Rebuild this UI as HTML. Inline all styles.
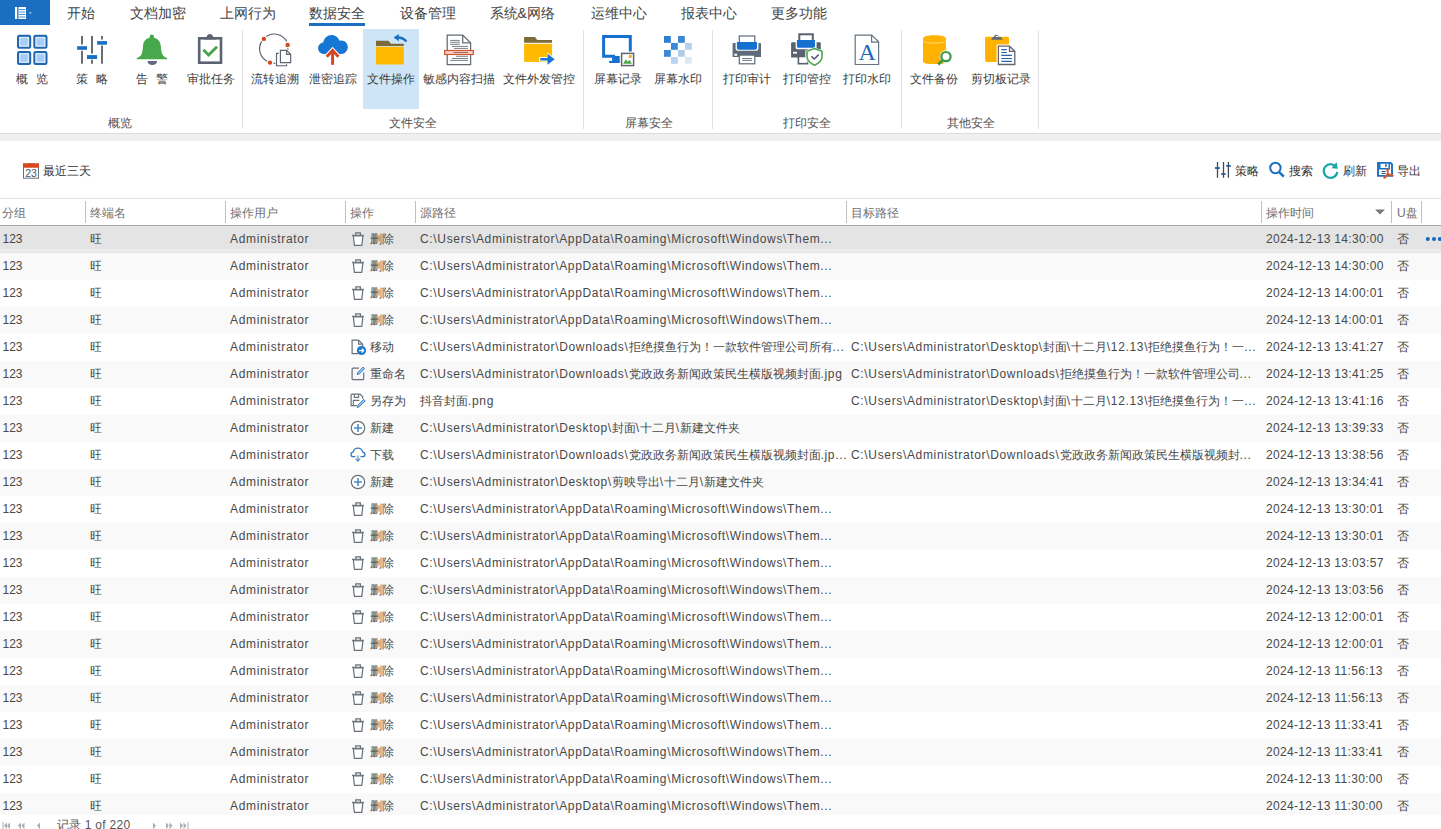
<!DOCTYPE html><html><head><meta charset="utf-8"><title>数据安全</title><style>
*{box-sizing:border-box}
html,body{margin:0;padding:0}
body{width:1441px;height:829px;overflow:hidden;position:relative;background:#fff;font-family:"Liberation Sans", sans-serif;color:#333}
.a{position:absolute;white-space:pre}
.t14{font-size:14px;line-height:20px;color:#444}
.t12{font-size:12px;line-height:20px;color:#3c3c3c}
.ic{position:absolute;width:40px;height:40px;overflow:visible}
.row{position:absolute;left:0;width:1441px;height:27px;font-size:12px;line-height:27px;color:#484848}
.row span{position:absolute;top:0;white-space:pre}
.L{letter-spacing:0.66px}
.c{letter-spacing:0}
i{font-style:normal;display:inline-block;width:1em;text-align:center;letter-spacing:0}
.hd{position:absolute;top:203px;font-size:12px;line-height:20px;color:#707070;white-space:pre}
.sep{position:absolute;top:201px;width:1px;height:22px;background:#c0c0c0}
.rsep{position:absolute;top:30px;width:1px;height:99px;background:#e2e2e2}
</style></head><body><div class="a" style="left:0;top:0;width:50px;height:25px;background:#1b6ec2"></div>
<svg class="a" style="left:0;top:0" width="50" height="25" viewBox="0 0 50 25"><rect x="15" y="7" width="2.2" height="12" fill="#fff"/><rect x="18.5" y="7" width="7.5" height="12" fill="#fff"/><path d="M19.2 9.5h6M19.2 12h6M19.2 14.5h6M19.2 17h6" stroke="#1b6ec2" stroke-width="0.8"/><rect x="29.5" y="12.2" width="1.8" height="1.2" fill="#cfe0f4"/></svg>
<div class="a t14" style="left:67px;top:3px"><i>开</i><i>始</i></div>
<div class="a t14" style="left:129.5px;top:3px"><i>文</i><i>档</i><i>加</i><i>密</i></div>
<div class="a t14" style="left:219.5px;top:3px"><i>上</i><i>网</i><i>行</i><i>为</i></div>
<div class="a t14" style="left:309px;top:3px"><i>数</i><i>据</i><i>安</i><i>全</i></div>
<div class="a t14" style="left:400px;top:3px"><i>设</i><i>备</i><i>管</i><i>理</i></div>
<div class="a t14" style="left:489.5px;top:3px"><i>系</i><i>统</i>&<i>网</i><i>络</i></div>
<div class="a t14" style="left:591px;top:3px"><i>运</i><i>维</i><i>中</i><i>心</i></div>
<div class="a t14" style="left:681px;top:3px"><i>报</i><i>表</i><i>中</i><i>心</i></div>
<div class="a t14" style="left:771px;top:3px"><i>更</i><i>多</i><i>功</i><i>能</i></div>
<div class="a" style="left:309px;top:23px;width:56px;height:3px;background:#1b6ec2"></div>
<div class="a" style="left:363px;top:29px;width:56px;height:80px;background:#cde5f7"></div>
<div class="rsep" style="left:242px"></div>
<div class="rsep" style="left:583px"></div>
<div class="rsep" style="left:712px"></div>
<div class="rsep" style="left:901px"></div>
<div class="rsep" style="left:1038px"></div>
<div class="a" style="left:0;top:133px;width:1441px;height:1px;background:#dcdcdc"></div>
<div class="a" style="left:0;top:134px;width:1441px;height:7px;background:#f0f0f0"></div>
<svg class="ic" style="left:12px;top:30px" viewBox="0 0 40 40"><g fill="#a9ccf6" stroke="#1f68b0" stroke-width="2">
<rect x="6" y="5.8" width="12.2" height="12" rx="1.3"/><rect x="22.3" y="5.8" width="12.2" height="12" rx="1.3"/>
<rect x="6" y="22" width="12.2" height="12" rx="1.3"/><rect x="22.3" y="22" width="12.2" height="12" rx="1.3"/></g>
<g fill="none" stroke="#dff0ff" stroke-width="1"><rect x="7.8" y="7.6" width="8.6" height="8.4"/><rect x="24.1" y="7.6" width="8.6" height="8.4"/><rect x="7.8" y="23.8" width="8.6" height="8.4"/><rect x="24.1" y="23.8" width="8.6" height="8.4"/></g></svg>
<svg class="ic" style="left:72px;top:30px" viewBox="0 0 40 40"><g stroke="#5a5f66" stroke-width="1.8"><path d="M10 6v8.6M10 20.8v13M20 6v17.4M20 29.8v4M30 6v3.5M30 15.5v18.3"/></g>
<g fill="#1a6fc4"><rect x="5.1" y="16.2" width="9.9" height="3.6"/><rect x="15" y="25.1" width="10.1" height="3.9"/><rect x="25.1" y="11.1" width="9.9" height="3.6"/></g></svg>
<svg class="ic" style="left:132px;top:30px" viewBox="0 0 40 40"><circle cx="19.8" cy="6.9" r="2.3" fill="#48a84c"/><path d="M19.8 7.6C25.6 7.6 28.4 11.2 28.8 16.2L29.4 21.5C29.9 25 31.6 26.8 34.9 28C35.4 28.3 35.2 29.3 34.6 29.3H5.2C4.6 29.3 4.4 28.3 4.9 28C8.2 26.8 9.9 25 10.4 21.5L11 16.2C11.4 11.2 14 7.6 19.8 7.6Z" fill="#48a84c"/>
<path d="M15.5 31h9.6c0 2.6-2.2 3.9-4.8 3.9s-4.8-1.3-4.8-3.9z" fill="#606b7b"/></svg>
<svg class="ic" style="left:190px;top:30px" viewBox="0 0 40 40"><rect x="9.2" y="8.3" width="21.8" height="24.4" fill="#fff" stroke="#5c6370" stroke-width="2.6"/>
<path d="M14 9.6h11.8v-1.6l-3-1.6c0-1.3-1.1-2.3-2.9-2.3s-2.9 1-2.9 2.3l-3 1.6z" fill="#5c6370"/>
<path d="M13.4 19.8l5.2 5.3l8.4-8.4" fill="none" stroke="#46a34a" stroke-width="2.8"/></svg>
<svg class="ic" style="left:255px;top:30px" viewBox="0 0 40 40"><g fill="none" stroke="#5b626c" stroke-width="1.15">
<path d="M11.4 6.4A14.3 14.3 0 0 1 31.8 11.6"/><path d="M6.6 11.4A14.3 14.3 0 0 0 12.2 31.3"/>
<path d="M32.9 18.2v1.6M18.6 33.3h1.6"/>
<path d="M23.7 23.4h-2.2v12.3h10.1v-1.4"/>
<path d="M25.4 20.3h6.2l4.1 4.1v8.2H25.4z"/><path d="M31.6 20.3v4.1h4.1"/></g>
<g fill="#d24a22"><circle cx="8.9" cy="8.9" r="2.2"/><circle cx="32.6" cy="15" r="2.2"/><circle cx="15" cy="32.6" r="2.2"/></g></svg>
<svg class="ic" style="left:313px;top:30px" viewBox="0 0 40 40"><path d="M11 24c-3.3 0-5.9-2.6-5.9-5.8c0-3 2.2-5.5 5.1-5.8c1.1-4.5 4.3-7.4 8.4-7.4c3.6 0 6.6 2.3 7.8 5.7c0.7-0.2 1.4-0.3 2.1-0.3c3.4 0 6.3 2.9 6.3 6.6s-2.9 7-6.5 7z" fill="#1676d4"/>
<g fill="none" stroke="#fff" stroke-width="5" stroke-linejoin="miter"><path d="M13.8 26.8L19.6 20.4L25.4 26.8"/><path d="M19.6 21v13.8"/></g>
<g fill="none" stroke="#d8431c" stroke-width="2.9" stroke-linejoin="miter"><path d="M13.8 26.8L19.6 20.4L25.4 26.8"/><path d="M19.6 21v13.8"/></g></svg>
<svg class="ic" style="left:370px;top:30px" viewBox="0 0 40 40"><path d="M6 10.8h12.4l2.8 3h12.6v2.2H6z" fill="#7c6b3a"/>
<rect x="6" y="16.8" width="27.8" height="17.7" fill="#ffb900"/>
<path d="M36.3 11.6c-2-3.4-5.3-4.3-10-4.1" fill="none" stroke="#1b6fc4" stroke-width="2.4"/>
<path d="M23.6 7.6l5.2-3.6v7.2z" fill="#1b6fc4"/></svg>
<svg class="ic" style="left:439px;top:30px" viewBox="0 0 40 40"><path d="M8.2 5.1h15.5l7.9 7.7v21.7H8.2z" fill="#fff" stroke="#646a72" stroke-width="1.25"/>
<path d="M23.7 5.1v7.7h7.9" fill="none" stroke="#646a72" stroke-width="1.25"/>
<g stroke="#7a8088" stroke-width="1"><path d="M11.1 10.4h9.7M11.1 12.3h9.7M11.1 14.3h9.7M13 16.4h16M15 18.4h14M17.1 26.3h11.9M13 28.5h16M11.1 30.4h17.9"/></g>
<rect x="5.6" y="20.5" width="28.7" height="4" fill="#fcd3c2" stroke="#cf5432" stroke-width="1.2"/>
<path d="M14.5 22.5h14.5" stroke="#8a5a50" stroke-width="0.9"/></svg>
<svg class="ic" style="left:519px;top:30px" viewBox="0 0 40 40"><path d="M5.1 7h10.8l2.3 2.9h14.9v2.9H5.1z" fill="#7c6b3a"/>
<rect x="5.1" y="13.8" width="28" height="18.1" fill="#ffb900"/>
<path d="M28 22.4l9.6 6.8l-9.6 6.8v-4.6h-7.8v-4.4h7.8z" fill="#fff"/>
<path d="M28.5 23.7l7.2 5.5l-7.2 5.6v-4.4h-7.2v-2.4h7.2z" fill="#1775d2"/></svg>
<svg class="ic" style="left:598px;top:30px" viewBox="0 0 40 40"><path d="M32.3 21.5V6.6H5.6v19.7h10v5.7" fill="none" stroke="#1670d0" stroke-width="3"/>
<rect x="11.1" y="30.9" width="10.6" height="2.1" fill="#1670d0"/><rect x="15.8" y="26" width="5.9" height="6" fill="#1670d0"/>
<rect x="23.6" y="23.4" width="12" height="12.2" fill="#fff" stroke="#5f6670" stroke-width="1.5"/>
<path d="M25.2 33.8l2.6-4.6l2.1 2.6l1.6-2l2.4 4z" fill="#4aa84c"/><circle cx="32.3" cy="26.4" r="1.7" fill="#f0b020"/></svg>
<svg class="ic" style="left:658px;top:30px" viewBox="0 0 40 40"><rect x="6" y="6" width="6.8" height="6.8" fill="#2f7fd0"/><rect x="20" y="6" width="6.8" height="6.8" fill="#3b87d0"/>
<rect x="13" y="13" width="6.8" height="6.8" fill="#3a88d8"/><rect x="27" y="13" width="6.8" height="6.8" fill="#b8d0ea"/>
<rect x="6" y="20" width="6.8" height="6.8" fill="#3a8ad8"/><rect x="20" y="20" width="6.8" height="6.8" fill="#b0cce8"/>
<rect x="13" y="27" width="6.8" height="6.8" fill="#b8d4f0"/><rect x="27" y="27" width="6.8" height="6.8" fill="#dce8f5"/></svg>
<svg class="ic" style="left:727px;top:30px" viewBox="0 0 40 40"><rect x="12.3" y="6" width="15.5" height="8" fill="#fff" stroke="#5f6b7a" stroke-width="1.2"/>
<path d="M5.6 14.2c0-0.8 0.6-1.2 1.4-1.2h26c0.6 0 1 0.4 1 1.2V27H5.6z" fill="#5f6b7a"/>
<path d="M8.6 12h22.8v6.2c0 1.6-1.2 2.6-2.6 2.6H11.2c-1.6 0-2.6-1-2.6-2.6z" fill="#fff"/>
<path d="M9.9 12h20.1v5.8c0 1.2-0.8 2-2 2H11.9c-1.2 0-2-0.8-2-2z" fill="#1670d0"/>
<rect x="7.3" y="23.8" width="2.8" height="2" fill="#fff"/>
<rect x="12.3" y="25.1" width="15.5" height="8.7" fill="#fff" stroke="#5f6b7a" stroke-width="1.2"/>
<path d="M15.2 28.5h9.7M15.2 30.4h9.7" stroke="#5f6b7a" stroke-width="0.9"/></svg>
<svg class="ic" style="left:787px;top:30px" viewBox="0 0 40 40"><rect x="12.3" y="4.3" width="13.5" height="7.5" fill="#fff" stroke="#5a6270" stroke-width="2"/>
<path d="M4.1 13.5c0-0.8 0.5-1.2 1.2-1.2h27.2c0.8 0 1.3 0.4 1.3 1.2v13.9H4.1z" fill="#5a6270"/>
<path d="M8.6 10.1h21v7.5c0 1-0.6 1.6-1.6 1.6H10.2c-1 0-1.6-0.6-1.6-1.6z" fill="#fff"/>
<path d="M9.9 10.1h18.1v6.2c0 1-0.6 1.4-1.4 1.4H11.3c-0.8 0-1.4-0.4-1.4-1.4z" fill="#1670d0"/>
<rect x="6" y="21.8" width="4" height="1.8" fill="#fff"/>
<rect x="11.4" y="26.5" width="9.2" height="7.2" fill="#fff" stroke="#5a6270" stroke-width="1.6"/>
<path d="M27.5 17.4l9.2 3.2v6c0 4.6-3.6 7.8-9.2 10.1c-5.6-2.3-9.2-5.5-9.2-10.1v-6z" fill="#fff"/>
<path d="M27.5 18.6l7.5 2.7v5.3c0 3.9-3 6.6-7.5 8.6c-4.5-2-7.5-4.7-7.5-8.6v-5.3z" fill="#fff" stroke="#4aa84c" stroke-width="1.6"/>
<path d="M24.4 26.3l2.9 2.7l4.4-4.4" fill="none" stroke="#5a5a78" stroke-width="1.6"/></svg>
<svg class="ic" style="left:847px;top:30px" viewBox="0 0 40 40"><path d="M8.2 5.1h16.4l7 6.7v22.7H8.2z" fill="#fff" stroke="#667280" stroke-width="1.2"/>
<path d="M24.6 5.1v7h7" fill="none" stroke="#667280" stroke-width="1.2"/>
<text x="20.2" y="29.7" text-anchor="middle" font-family="Liberation Serif" font-size="24" fill="#1a68c0">A</text></svg>
<svg class="ic" style="left:917px;top:30px" viewBox="0 0 40 40"><path d="M6 8.6c0-2.2 5.1-3.4 11.5-3.4S29 6.4 29 8.6v22.8c0 2.2-5.1 2.6-11.5 2.6S6 33.6 6 31.4z" fill="#ffb200"/>
<path d="M6.6 11.2c1.6 1.4 5.6 1.9 10.9 1.9s9.3-0.5 10.9-1.9" fill="none" stroke="#ffe28a" stroke-width="0.9"/>
<circle cx="29" cy="26.6" r="6.3" fill="#fff"/>
<circle cx="29" cy="26.6" r="4.6" fill="#fff" stroke="#3c9a48" stroke-width="2.2"/>
<path d="M25.6 30.2l-4.4 4.3" stroke="#3c9a48" stroke-width="3"/></svg>
<svg class="ic" style="left:980px;top:30px" viewBox="0 0 40 40"><rect x="5.1" y="6.8" width="23.9" height="25.1" rx="1.4" fill="#ffb200"/>
<path d="M11.1 9.7h11.6l-1.8-2.7h-2.4c0-1.2-0.9-2.2-2.2-2.2s-2.2 1-2.2 2.2h-1.2z" fill="#606a78"/><rect x="15.9" y="5.9" width="2" height="1.2" fill="#fff"/>
<path d="M16.6 14.4h13.6l6.4 6.2v15.7H16.6z" fill="#fff"/>
<path d="M18.4 16.2h11.1l5.3 5.1v13.2H18.4z" fill="#fff" stroke="#5f6670" stroke-width="1.3"/>
<path d="M29.5 16.2v5.1h5.3" fill="none" stroke="#5f6670" stroke-width="1.3"/>
<g stroke="#2a64b0" stroke-width="1.2"><path d="M21.3 19.6h5.5M21.3 22.5h5.5M21.3 25.4h10.6M21.3 28.5h10.6M21.3 31.4h10.6"/></g></svg>
<div class="a t12" style="left:16px;top:69px"><i>概</i></div><div class="a t12" style="left:36px;top:69px"><i>览</i></div>
<div class="a t12" style="left:76px;top:69px"><i>策</i></div><div class="a t12" style="left:96px;top:69px"><i>略</i></div>
<div class="a t12" style="left:136px;top:69px"><i>告</i></div><div class="a t12" style="left:156px;top:69px"><i>警</i></div>
<div class="a t12" style="left:186.5px;top:69px"><i>审</i><i>批</i><i>任</i><i>务</i></div>
<div class="a t12" style="left:251px;top:69px"><i>流</i><i>转</i><i>追</i><i>溯</i></div>
<div class="a t12" style="left:309.4px;top:69px"><i>泄</i><i>密</i><i>追</i><i>踪</i></div>
<div class="a t12" style="left:367px;top:69px"><i>文</i><i>件</i><i>操</i><i>作</i></div>
<div class="a t12" style="left:423px;top:69px"><i>敏</i><i>感</i><i>内</i><i>容</i><i>扫</i><i>描</i></div>
<div class="a t12" style="left:503.2px;top:69px"><i>文</i><i>件</i><i>外</i><i>发</i><i>管</i><i>控</i></div>
<div class="a t12" style="left:594px;top:69px"><i>屏</i><i>幕</i><i>记</i><i>录</i></div>
<div class="a t12" style="left:654.3px;top:69px"><i>屏</i><i>幕</i><i>水</i><i>印</i></div>
<div class="a t12" style="left:723px;top:69px"><i>打</i><i>印</i><i>审</i><i>计</i></div>
<div class="a t12" style="left:783.4px;top:69px"><i>打</i><i>印</i><i>管</i><i>控</i></div>
<div class="a t12" style="left:843.2px;top:69px"><i>打</i><i>印</i><i>水</i><i>印</i></div>
<div class="a t12" style="left:910.3px;top:69px"><i>文</i><i>件</i><i>备</i><i>份</i></div>
<div class="a t12" style="left:970.6px;top:69px"><i>剪</i><i>切</i><i>板</i><i>记</i><i>录</i></div>
<div class="a t12" style="left:108.4px;top:113px;color:#505050"><i>概</i><i>览</i></div>
<div class="a t12" style="left:389.3px;top:113px;color:#505050"><i>文</i><i>件</i><i>安</i><i>全</i></div>
<div class="a t12" style="left:624.5px;top:113px;color:#505050"><i>屏</i><i>幕</i><i>安</i><i>全</i></div>
<div class="a t12" style="left:783.4px;top:113px;color:#505050"><i>打</i><i>印</i><i>安</i><i>全</i></div>
<div class="a t12" style="left:946.7px;top:113px;color:#505050"><i>其</i><i>他</i><i>安</i><i>全</i></div>
<svg class="a" style="left:20px;top:158px" width="24" height="24" viewBox="0 0 24 24"><rect x="3.5" y="6" width="15" height="14.2" fill="#fff" stroke="#6a7078" stroke-width="1"/><path d="M3 5.8c0-0.4 0.3-0.6 0.7-0.6h14.6c0.4 0 0.7 0.2 0.7 0.6v3.9H3z" fill="#d9481c"/><path d="M6.2 4.6v1.6M15.8 4.6v1.6" stroke="#e8b070" stroke-width="1"/><text x="11" y="18.6" text-anchor="middle" font-family="Liberation Sans" font-size="10.5" fill="#4a5866">23</text></svg>
<div class="a t12" style="left:43.3px;top:161px;color:#333"><i>最</i><i>近</i><i>三</i><i>天</i></div>
<svg class="a" style="left:1211px;top:158px" width="24" height="24" viewBox="0 0 24 24"><g stroke="#3f4a55" stroke-width="1.3"><path d="M6.5 4.1v15.6M12.5 4.1v15.6M17.4 4.1v15.6"/></g><g fill="#1c5a94"><rect x="4" y="9.1" width="4.7" height="1.8"/><rect x="10.1" y="15.2" width="4.7" height="1.6"/><rect x="15.1" y="7.1" width="4.8" height="1.6"/></g></svg>
<div class="a t12" style="left:1235px;top:161px;color:#333"><i>策</i><i>略</i></div>
<svg class="a" style="left:1265px;top:158px" width="24" height="24" viewBox="0 0 24 24"><circle cx="10.4" cy="10" r="5.2" fill="none" stroke="#1a6fc0" stroke-width="2"/><path d="M14.2 14.1l4.6 4.6" stroke="#1a6fc0" stroke-width="2.6"/></svg>
<div class="a t12" style="left:1289px;top:161px;color:#333"><i>搜</i><i>索</i></div>
<svg class="a" style="left:1319px;top:158px" width="24" height="24" viewBox="0 0 24 24"><path d="M17.2 9.2A6.8 6.8 0 1 0 18.3 14" fill="none" stroke="#17a6a6" stroke-width="2.2"/><path d="M17.6 4.2l1.2 6.6l-6.4-0.6z" fill="#17a6a6"/></svg>
<div class="a t12" style="left:1343.3px;top:161px;color:#333"><i>刷</i><i>新</i></div>
<svg class="a" style="left:1373px;top:158px" width="24" height="24" viewBox="0 0 24 24"><path d="M5 5h12.6l1.4 1.4v11.5H5z" fill="none" stroke="#1a6fc0" stroke-width="1.9"/><path d="M6.8 4.9h9.4v5.8H6.8z" fill="#fff" stroke="#1a6fc0" stroke-width="1.5"/><rect x="12.2" y="6.2" width="1.5" height="2.5" fill="#1a4f8a"/><path d="M8.6 13.5h4M8.6 15.5h4" stroke="#1a4f8a" stroke-width="1.1"/><path d="M14.6 10.8c-0.8 0.2-0.6 2.6 0.6 4.6c1.2 2 3.2 2.8 4.4 2.6c0.8-0.2 0.2-1.4-1.8-1.4c-2.8 0-5.8 1.2-6.6 2.6c-0.6 1 0.6 1.2 1.6-0.2c1.2-1.6 2-4.2 2.2-6c0.1-1.2 0-2.4-0.4-2.2z" fill="none" stroke="#d4582e" stroke-width="1.5"/></svg>
<div class="a t12" style="left:1397px;top:161px;color:#333"><i>导</i><i>出</i></div>
<div class="a" style="left:0;top:198px;width:1441px;height:1px;background:#e1e1e1"></div>
<div class="hd" style="left:2px"><i>分</i><i>组</i></div>
<div class="hd" style="left:90px"><i>终</i><i>端</i><i>名</i></div>
<div class="hd" style="left:230px"><i>操</i><i>作</i><i>用</i><i>户</i></div>
<div class="hd" style="left:350px"><i>操</i><i>作</i></div>
<div class="hd" style="left:420px"><i>源</i><i>路</i><i>径</i></div>
<div class="hd" style="left:851px"><i>目</i><i>标</i><i>路</i><i>径</i></div>
<div class="hd" style="left:1266px"><i>操</i><i>作</i><i>时</i><i>间</i></div>
<div class="hd" style="left:1397px">U<i>盘</i></div>
<div class="sep" style="left:85px"></div>
<div class="sep" style="left:225px"></div>
<div class="sep" style="left:345px"></div>
<div class="sep" style="left:415px"></div>
<div class="sep" style="left:846px"></div>
<div class="sep" style="left:1261px"></div>
<div class="sep" style="left:1391px"></div>
<div class="sep" style="left:1421px"></div>
<svg class="a" style="left:1374px;top:208px" width="12" height="8" viewBox="0 0 12 8"><path d="M1 1.5h10l-5 5z" fill="#7a7a7a"/></svg>
<div class="a" style="left:0;top:225px;width:1441px;height:1px;background:#a6a6a6"></div>
<div class="row" style="top:226px;background:#e4e4e4"><span style="left:2.5px">123</span><span style="left:90px"><i>旺</i></span><span class="L" style="left:230px">Administrator</span><span style="left:370px"><i>删</i><i>除</i></span><span class="L" style="left:420px">C:\Users\Administrator\AppData\Roaming\Microsoft\Windows\Them...</span><span style="left:1266px;letter-spacing:0.33px">2024-12-13 14:30:00</span><span style="left:1397px"><i>否</i></span></div>
<svg class="a" style="left:348px;top:229px" width="20" height="20" viewBox="0 0 20 20"><path d="M4 6.4h11.8M7.8 6.2V3.8h4.6v2.4" fill="none" stroke="#68707a" stroke-width="1.2"/><path d="M5.3 6.8l1.1 9.6h7.4l1.1-9.6z" fill="#fff" stroke="#68707a" stroke-width="1.2"/></svg>
<div class="row" style="top:253px;background:#f9f9f9"><span style="left:2.5px">123</span><span style="left:90px"><i>旺</i></span><span class="L" style="left:230px">Administrator</span><span style="left:370px"><i>删</i><i>除</i></span><span class="L" style="left:420px">C:\Users\Administrator\AppData\Roaming\Microsoft\Windows\Them...</span><span style="left:1266px;letter-spacing:0.33px">2024-12-13 14:30:00</span><span style="left:1397px"><i>否</i></span></div>
<svg class="a" style="left:348px;top:256px" width="20" height="20" viewBox="0 0 20 20"><path d="M4 6.4h11.8M7.8 6.2V3.8h4.6v2.4" fill="none" stroke="#68707a" stroke-width="1.2"/><path d="M5.3 6.8l1.1 9.6h7.4l1.1-9.6z" fill="#fff" stroke="#68707a" stroke-width="1.2"/></svg>
<div class="row" style="top:280px;background:#ffffff"><span style="left:2.5px">123</span><span style="left:90px"><i>旺</i></span><span class="L" style="left:230px">Administrator</span><span style="left:370px"><i>删</i><i>除</i></span><span class="L" style="left:420px">C:\Users\Administrator\AppData\Roaming\Microsoft\Windows\Them...</span><span style="left:1266px;letter-spacing:0.33px">2024-12-13 14:00:01</span><span style="left:1397px"><i>否</i></span></div>
<svg class="a" style="left:348px;top:283px" width="20" height="20" viewBox="0 0 20 20"><path d="M4 6.4h11.8M7.8 6.2V3.8h4.6v2.4" fill="none" stroke="#68707a" stroke-width="1.2"/><path d="M5.3 6.8l1.1 9.6h7.4l1.1-9.6z" fill="#fff" stroke="#68707a" stroke-width="1.2"/></svg>
<div class="row" style="top:307px;background:#f9f9f9"><span style="left:2.5px">123</span><span style="left:90px"><i>旺</i></span><span class="L" style="left:230px">Administrator</span><span style="left:370px"><i>删</i><i>除</i></span><span class="L" style="left:420px">C:\Users\Administrator\AppData\Roaming\Microsoft\Windows\Them...</span><span style="left:1266px;letter-spacing:0.33px">2024-12-13 14:00:01</span><span style="left:1397px"><i>否</i></span></div>
<svg class="a" style="left:348px;top:310px" width="20" height="20" viewBox="0 0 20 20"><path d="M4 6.4h11.8M7.8 6.2V3.8h4.6v2.4" fill="none" stroke="#68707a" stroke-width="1.2"/><path d="M5.3 6.8l1.1 9.6h7.4l1.1-9.6z" fill="#fff" stroke="#68707a" stroke-width="1.2"/></svg>
<div class="row" style="top:334px;background:#ffffff"><span style="left:2.5px">123</span><span style="left:90px"><i>旺</i></span><span class="L" style="left:230px">Administrator</span><span style="left:370px"><i>移</i><i>动</i></span><span class="L" style="left:420px">C:\Users\Administrator\Downloads\<i>拒</i><i>绝</i><i>摸</i><i>鱼</i><i>行</i><i>为</i><i>！</i><i>一</i><i>款</i><i>软</i><i>件</i><i>管</i><i>理</i><i>公</i><i>司</i><i>所</i><i>有</i>...</span><span class="L" style="left:851px">C:\Users\Administrator\Desktop\<i>封</i><i>面</i>\<i>十</i><i>二</i><i>月</i>\12.13\<i>拒</i><i>绝</i><i>摸</i><i>鱼</i><i>行</i><i>为</i><i>！</i><i>一</i>...</span><span style="left:1266px;letter-spacing:0.33px">2024-12-13 13:41:27</span><span style="left:1397px"><i>否</i></span></div>
<svg class="a" style="left:348px;top:337px" width="20" height="20" viewBox="0 0 20 20"><path d="M10.6 3.1H4.1v13.5h6M10.6 3.1l4.1 4.1v2.6M10.6 3.1v4.1h4.1" fill="none" stroke="#68707a" stroke-width="1.2"/><circle cx="13.5" cy="13.5" r="4.6" fill="#1a78d0"/><path d="M11 13.6h4.6M13.7 11.6l2 2l-2 2" fill="none" stroke="#fff" stroke-width="1.3"/></svg>
<div class="row" style="top:361px;background:#f9f9f9"><span style="left:2.5px">123</span><span style="left:90px"><i>旺</i></span><span class="L" style="left:230px">Administrator</span><span style="left:370px"><i>重</i><i>命</i><i>名</i></span><span class="L" style="left:420px">C:\Users\Administrator\Downloads\<i>党</i><i>政</i><i>政</i><i>务</i><i>新</i><i>闻</i><i>政</i><i>策</i><i>民</i><i>生</i><i>横</i><i>版</i><i>视</i><i>频</i><i>封</i><i>面</i>.jpg</span><span class="L" style="left:851px">C:\Users\Administrator\Downloads\<i>拒</i><i>绝</i><i>摸</i><i>鱼</i><i>行</i><i>为</i><i>！</i><i>一</i><i>款</i><i>软</i><i>件</i><i>管</i><i>理</i><i>公</i><i>司</i>...</span><span style="left:1266px;letter-spacing:0.33px">2024-12-13 13:41:25</span><span style="left:1397px"><i>否</i></span></div>
<svg class="a" style="left:348px;top:364px" width="20" height="20" viewBox="0 0 20 20"><path d="M11 4.1H5.1c-0.6 0-1 0.4-1 1v9.6c0 0.6 0.4 1 1 1h9.6c0.6 0 1-0.4 1-1V8.6" fill="none" stroke="#68707a" stroke-width="1.2"/><path d="M9.2 10.4l0.5-1.9l5.4-5.4l1.5 1.5l-5.4 5.4z" fill="#9ccbf0" stroke="#3a78b8" stroke-width="1"/></svg>
<div class="row" style="top:388px;background:#ffffff"><span style="left:2.5px">123</span><span style="left:90px"><i>旺</i></span><span class="L" style="left:230px">Administrator</span><span style="left:370px"><i>另</i><i>存</i><i>为</i></span><span class="L" style="left:420px"><i>抖</i><i>音</i><i>封</i><i>面</i>.png</span><span class="L" style="left:851px">C:\Users\Administrator\Desktop\<i>封</i><i>面</i>\<i>十</i><i>二</i><i>月</i>\12.13\<i>拒</i><i>绝</i><i>摸</i><i>鱼</i><i>行</i><i>为</i><i>！</i><i>一</i>...</span><span style="left:1266px;letter-spacing:0.33px">2024-12-13 13:41:16</span><span style="left:1397px"><i>否</i></span></div>
<svg class="a" style="left:348px;top:391px" width="20" height="20" viewBox="0 0 20 20"><path d="M8.8 14.7H3.1V4.1c0-0.6 0.4-1 1-1h7.9l2.7 2.7v2" fill="none" stroke="#68707a" stroke-width="1.2"/><path d="M6.3 3.1v3.3h4.3V3.1M5.3 14.4V9.4h6" fill="none" stroke="#68707a" stroke-width="1.1"/><path d="M9.2 16.4l0.5-2l6-6l1.5 1.5l-6 6z" fill="#9ccbf0" stroke="#3a78b8" stroke-width="1"/></svg>
<div class="row" style="top:415px;background:#f9f9f9"><span style="left:2.5px">123</span><span style="left:90px"><i>旺</i></span><span class="L" style="left:230px">Administrator</span><span style="left:370px"><i>新</i><i>建</i></span><span class="L" style="left:420px">C:\Users\Administrator\Desktop\<i>封</i><i>面</i>\<i>十</i><i>二</i><i>月</i>\<i>新</i><i>建</i><i>文</i><i>件</i><i>夹</i></span><span style="left:1266px;letter-spacing:0.33px">2024-12-13 13:39:33</span><span style="left:1397px"><i>否</i></span></div>
<svg class="a" style="left:348px;top:418px" width="20" height="20" viewBox="0 0 20 20"><circle cx="10" cy="10" r="6.7" fill="#fff" stroke="#68707a" stroke-width="1.2"/><path d="M6 10h8M10 6v8" stroke="#4a8ccc" stroke-width="1.6"/></svg>
<div class="row" style="top:442px;background:#ffffff"><span style="left:2.5px">123</span><span style="left:90px"><i>旺</i></span><span class="L" style="left:230px">Administrator</span><span style="left:370px"><i>下</i><i>载</i></span><span class="L" style="left:420px">C:\Users\Administrator\Downloads\<i>党</i><i>政</i><i>政</i><i>务</i><i>新</i><i>闻</i><i>政</i><i>策</i><i>民</i><i>生</i><i>横</i><i>版</i><i>视</i><i>频</i><i>封</i><i>面</i>.jp...</span><span class="L" style="left:851px">C:\Users\Administrator\Downloads\<i>党</i><i>政</i><i>政</i><i>务</i><i>新</i><i>闻</i><i>政</i><i>策</i><i>民</i><i>生</i><i>横</i><i>版</i><i>视</i><i>频</i><i>封</i>...</span><span style="left:1266px;letter-spacing:0.33px">2024-12-13 13:38:56</span><span style="left:1397px"><i>否</i></span></div>
<svg class="a" style="left:348px;top:445px" width="20" height="20" viewBox="0 0 20 20"><path d="M7.4 11.6H5.2c-1.3 0-2.2-1-2.2-2.2c0-1.2 0.9-2.2 2.1-2.3c0.5-2.3 2.4-4 4.8-4s4.3 1.7 4.8 4c1.2 0.1 2.2 1.1 2.2 2.3c0 1.2-1 2.2-2.3 2.2h-2.1" fill="none" stroke="#3a7ab8" stroke-width="1.3"/><path d="M9.9 10.4v5.6M7.6 13.6l2.3 2.6l2.3-2.6" fill="none" stroke="#6a98c8" stroke-width="1.3"/></svg>
<div class="row" style="top:469px;background:#f9f9f9"><span style="left:2.5px">123</span><span style="left:90px"><i>旺</i></span><span class="L" style="left:230px">Administrator</span><span style="left:370px"><i>新</i><i>建</i></span><span class="L" style="left:420px">C:\Users\Administrator\Desktop\<i>剪</i><i>映</i><i>导</i><i>出</i>\<i>十</i><i>二</i><i>月</i>\<i>新</i><i>建</i><i>文</i><i>件</i><i>夹</i></span><span style="left:1266px;letter-spacing:0.33px">2024-12-13 13:34:41</span><span style="left:1397px"><i>否</i></span></div>
<svg class="a" style="left:348px;top:472px" width="20" height="20" viewBox="0 0 20 20"><circle cx="10" cy="10" r="6.7" fill="#fff" stroke="#68707a" stroke-width="1.2"/><path d="M6 10h8M10 6v8" stroke="#4a8ccc" stroke-width="1.6"/></svg>
<div class="row" style="top:496px;background:#ffffff"><span style="left:2.5px">123</span><span style="left:90px"><i>旺</i></span><span class="L" style="left:230px">Administrator</span><span style="left:370px"><i>删</i><i>除</i></span><span class="L" style="left:420px">C:\Users\Administrator\AppData\Roaming\Microsoft\Windows\Them...</span><span style="left:1266px;letter-spacing:0.33px">2024-12-13 13:30:01</span><span style="left:1397px"><i>否</i></span></div>
<svg class="a" style="left:348px;top:499px" width="20" height="20" viewBox="0 0 20 20"><path d="M4 6.4h11.8M7.8 6.2V3.8h4.6v2.4" fill="none" stroke="#68707a" stroke-width="1.2"/><path d="M5.3 6.8l1.1 9.6h7.4l1.1-9.6z" fill="#fff" stroke="#68707a" stroke-width="1.2"/></svg>
<div class="row" style="top:523px;background:#f9f9f9"><span style="left:2.5px">123</span><span style="left:90px"><i>旺</i></span><span class="L" style="left:230px">Administrator</span><span style="left:370px"><i>删</i><i>除</i></span><span class="L" style="left:420px">C:\Users\Administrator\AppData\Roaming\Microsoft\Windows\Them...</span><span style="left:1266px;letter-spacing:0.33px">2024-12-13 13:30:01</span><span style="left:1397px"><i>否</i></span></div>
<svg class="a" style="left:348px;top:526px" width="20" height="20" viewBox="0 0 20 20"><path d="M4 6.4h11.8M7.8 6.2V3.8h4.6v2.4" fill="none" stroke="#68707a" stroke-width="1.2"/><path d="M5.3 6.8l1.1 9.6h7.4l1.1-9.6z" fill="#fff" stroke="#68707a" stroke-width="1.2"/></svg>
<div class="row" style="top:550px;background:#ffffff"><span style="left:2.5px">123</span><span style="left:90px"><i>旺</i></span><span class="L" style="left:230px">Administrator</span><span style="left:370px"><i>删</i><i>除</i></span><span class="L" style="left:420px">C:\Users\Administrator\AppData\Roaming\Microsoft\Windows\Them...</span><span style="left:1266px;letter-spacing:0.33px">2024-12-13 13:03:57</span><span style="left:1397px"><i>否</i></span></div>
<svg class="a" style="left:348px;top:553px" width="20" height="20" viewBox="0 0 20 20"><path d="M4 6.4h11.8M7.8 6.2V3.8h4.6v2.4" fill="none" stroke="#68707a" stroke-width="1.2"/><path d="M5.3 6.8l1.1 9.6h7.4l1.1-9.6z" fill="#fff" stroke="#68707a" stroke-width="1.2"/></svg>
<div class="row" style="top:577px;background:#f9f9f9"><span style="left:2.5px">123</span><span style="left:90px"><i>旺</i></span><span class="L" style="left:230px">Administrator</span><span style="left:370px"><i>删</i><i>除</i></span><span class="L" style="left:420px">C:\Users\Administrator\AppData\Roaming\Microsoft\Windows\Them...</span><span style="left:1266px;letter-spacing:0.33px">2024-12-13 13:03:56</span><span style="left:1397px"><i>否</i></span></div>
<svg class="a" style="left:348px;top:580px" width="20" height="20" viewBox="0 0 20 20"><path d="M4 6.4h11.8M7.8 6.2V3.8h4.6v2.4" fill="none" stroke="#68707a" stroke-width="1.2"/><path d="M5.3 6.8l1.1 9.6h7.4l1.1-9.6z" fill="#fff" stroke="#68707a" stroke-width="1.2"/></svg>
<div class="row" style="top:604px;background:#ffffff"><span style="left:2.5px">123</span><span style="left:90px"><i>旺</i></span><span class="L" style="left:230px">Administrator</span><span style="left:370px"><i>删</i><i>除</i></span><span class="L" style="left:420px">C:\Users\Administrator\AppData\Roaming\Microsoft\Windows\Them...</span><span style="left:1266px;letter-spacing:0.33px">2024-12-13 12:00:01</span><span style="left:1397px"><i>否</i></span></div>
<svg class="a" style="left:348px;top:607px" width="20" height="20" viewBox="0 0 20 20"><path d="M4 6.4h11.8M7.8 6.2V3.8h4.6v2.4" fill="none" stroke="#68707a" stroke-width="1.2"/><path d="M5.3 6.8l1.1 9.6h7.4l1.1-9.6z" fill="#fff" stroke="#68707a" stroke-width="1.2"/></svg>
<div class="row" style="top:631px;background:#f9f9f9"><span style="left:2.5px">123</span><span style="left:90px"><i>旺</i></span><span class="L" style="left:230px">Administrator</span><span style="left:370px"><i>删</i><i>除</i></span><span class="L" style="left:420px">C:\Users\Administrator\AppData\Roaming\Microsoft\Windows\Them...</span><span style="left:1266px;letter-spacing:0.33px">2024-12-13 12:00:01</span><span style="left:1397px"><i>否</i></span></div>
<svg class="a" style="left:348px;top:634px" width="20" height="20" viewBox="0 0 20 20"><path d="M4 6.4h11.8M7.8 6.2V3.8h4.6v2.4" fill="none" stroke="#68707a" stroke-width="1.2"/><path d="M5.3 6.8l1.1 9.6h7.4l1.1-9.6z" fill="#fff" stroke="#68707a" stroke-width="1.2"/></svg>
<div class="row" style="top:658px;background:#ffffff"><span style="left:2.5px">123</span><span style="left:90px"><i>旺</i></span><span class="L" style="left:230px">Administrator</span><span style="left:370px"><i>删</i><i>除</i></span><span class="L" style="left:420px">C:\Users\Administrator\AppData\Roaming\Microsoft\Windows\Them...</span><span style="left:1266px;letter-spacing:0.33px">2024-12-13 11:56:13</span><span style="left:1397px"><i>否</i></span></div>
<svg class="a" style="left:348px;top:661px" width="20" height="20" viewBox="0 0 20 20"><path d="M4 6.4h11.8M7.8 6.2V3.8h4.6v2.4" fill="none" stroke="#68707a" stroke-width="1.2"/><path d="M5.3 6.8l1.1 9.6h7.4l1.1-9.6z" fill="#fff" stroke="#68707a" stroke-width="1.2"/></svg>
<div class="row" style="top:685px;background:#f9f9f9"><span style="left:2.5px">123</span><span style="left:90px"><i>旺</i></span><span class="L" style="left:230px">Administrator</span><span style="left:370px"><i>删</i><i>除</i></span><span class="L" style="left:420px">C:\Users\Administrator\AppData\Roaming\Microsoft\Windows\Them...</span><span style="left:1266px;letter-spacing:0.33px">2024-12-13 11:56:13</span><span style="left:1397px"><i>否</i></span></div>
<svg class="a" style="left:348px;top:688px" width="20" height="20" viewBox="0 0 20 20"><path d="M4 6.4h11.8M7.8 6.2V3.8h4.6v2.4" fill="none" stroke="#68707a" stroke-width="1.2"/><path d="M5.3 6.8l1.1 9.6h7.4l1.1-9.6z" fill="#fff" stroke="#68707a" stroke-width="1.2"/></svg>
<div class="row" style="top:712px;background:#ffffff"><span style="left:2.5px">123</span><span style="left:90px"><i>旺</i></span><span class="L" style="left:230px">Administrator</span><span style="left:370px"><i>删</i><i>除</i></span><span class="L" style="left:420px">C:\Users\Administrator\AppData\Roaming\Microsoft\Windows\Them...</span><span style="left:1266px;letter-spacing:0.33px">2024-12-13 11:33:41</span><span style="left:1397px"><i>否</i></span></div>
<svg class="a" style="left:348px;top:715px" width="20" height="20" viewBox="0 0 20 20"><path d="M4 6.4h11.8M7.8 6.2V3.8h4.6v2.4" fill="none" stroke="#68707a" stroke-width="1.2"/><path d="M5.3 6.8l1.1 9.6h7.4l1.1-9.6z" fill="#fff" stroke="#68707a" stroke-width="1.2"/></svg>
<div class="row" style="top:739px;background:#f9f9f9"><span style="left:2.5px">123</span><span style="left:90px"><i>旺</i></span><span class="L" style="left:230px">Administrator</span><span style="left:370px"><i>删</i><i>除</i></span><span class="L" style="left:420px">C:\Users\Administrator\AppData\Roaming\Microsoft\Windows\Them...</span><span style="left:1266px;letter-spacing:0.33px">2024-12-13 11:33:41</span><span style="left:1397px"><i>否</i></span></div>
<svg class="a" style="left:348px;top:742px" width="20" height="20" viewBox="0 0 20 20"><path d="M4 6.4h11.8M7.8 6.2V3.8h4.6v2.4" fill="none" stroke="#68707a" stroke-width="1.2"/><path d="M5.3 6.8l1.1 9.6h7.4l1.1-9.6z" fill="#fff" stroke="#68707a" stroke-width="1.2"/></svg>
<div class="row" style="top:766px;background:#ffffff"><span style="left:2.5px">123</span><span style="left:90px"><i>旺</i></span><span class="L" style="left:230px">Administrator</span><span style="left:370px"><i>删</i><i>除</i></span><span class="L" style="left:420px">C:\Users\Administrator\AppData\Roaming\Microsoft\Windows\Them...</span><span style="left:1266px;letter-spacing:0.33px">2024-12-13 11:30:00</span><span style="left:1397px"><i>否</i></span></div>
<svg class="a" style="left:348px;top:769px" width="20" height="20" viewBox="0 0 20 20"><path d="M4 6.4h11.8M7.8 6.2V3.8h4.6v2.4" fill="none" stroke="#68707a" stroke-width="1.2"/><path d="M5.3 6.8l1.1 9.6h7.4l1.1-9.6z" fill="#fff" stroke="#68707a" stroke-width="1.2"/></svg>
<div class="row" style="top:793px;background:#f9f9f9"><span style="left:2.5px">123</span><span style="left:90px"><i>旺</i></span><span class="L" style="left:230px">Administrator</span><span style="left:370px"><i>删</i><i>除</i></span><span class="L" style="left:420px">C:\Users\Administrator\AppData\Roaming\Microsoft\Windows\Them...</span><span style="left:1266px;letter-spacing:0.33px">2024-12-13 11:30:00</span><span style="left:1397px"><i>否</i></span></div>
<svg class="a" style="left:348px;top:796px" width="20" height="20" viewBox="0 0 20 20"><path d="M4 6.4h11.8M7.8 6.2V3.8h4.6v2.4" fill="none" stroke="#68707a" stroke-width="1.2"/><path d="M5.3 6.8l1.1 9.6h7.4l1.1-9.6z" fill="#fff" stroke="#68707a" stroke-width="1.2"/></svg>
<div class="a" style="left:0;top:249px;width:1441px;height:3px;background:#ececec"></div>
<svg class="a" style="left:1420px;top:234px" width="21" height="10" viewBox="0 0 21 10"><g fill="#1668bc"><circle cx="7.8" cy="4.9" r="2"/><circle cx="14" cy="4.9" r="2"/><circle cx="19.8" cy="4.9" r="2"/></g></svg>
<div class="a" style="left:0;top:815px;width:1441px;height:14px;background:#fff"></div>
<svg class="a" style="left:0;top:815px" width="200" height="14" viewBox="0 0 200 14"><g fill="#aab0b8"><rect x="2.5" y="7" width="1" height="7"/><path d="M7 10.5l3-3v7z"/><path d="M4 10.5l3-3v7z"/><path d="M18 10.5l3-3v7z"/><path d="M21.5 10.5l3-3v7z"/><path d="M37 10.5l3-3v7z"/><path d="M156 10.5l-3-3v7z"/><path d="M169 10.5l-3-3v7z"/><path d="M172.5 10.5l-3-3v7z"/><path d="M183 10.5l-3-3v7z"/><path d="M186.5 10.5l-3-3v7z"/><rect x="187.5" y="7" width="1" height="7"/></g></svg>
<div class="a" style="left:57px;top:815px;font-size:12px;line-height:20px;color:#555;letter-spacing:0.3px"><i>记</i><i>录</i> 1 of 220</div></body></html>
